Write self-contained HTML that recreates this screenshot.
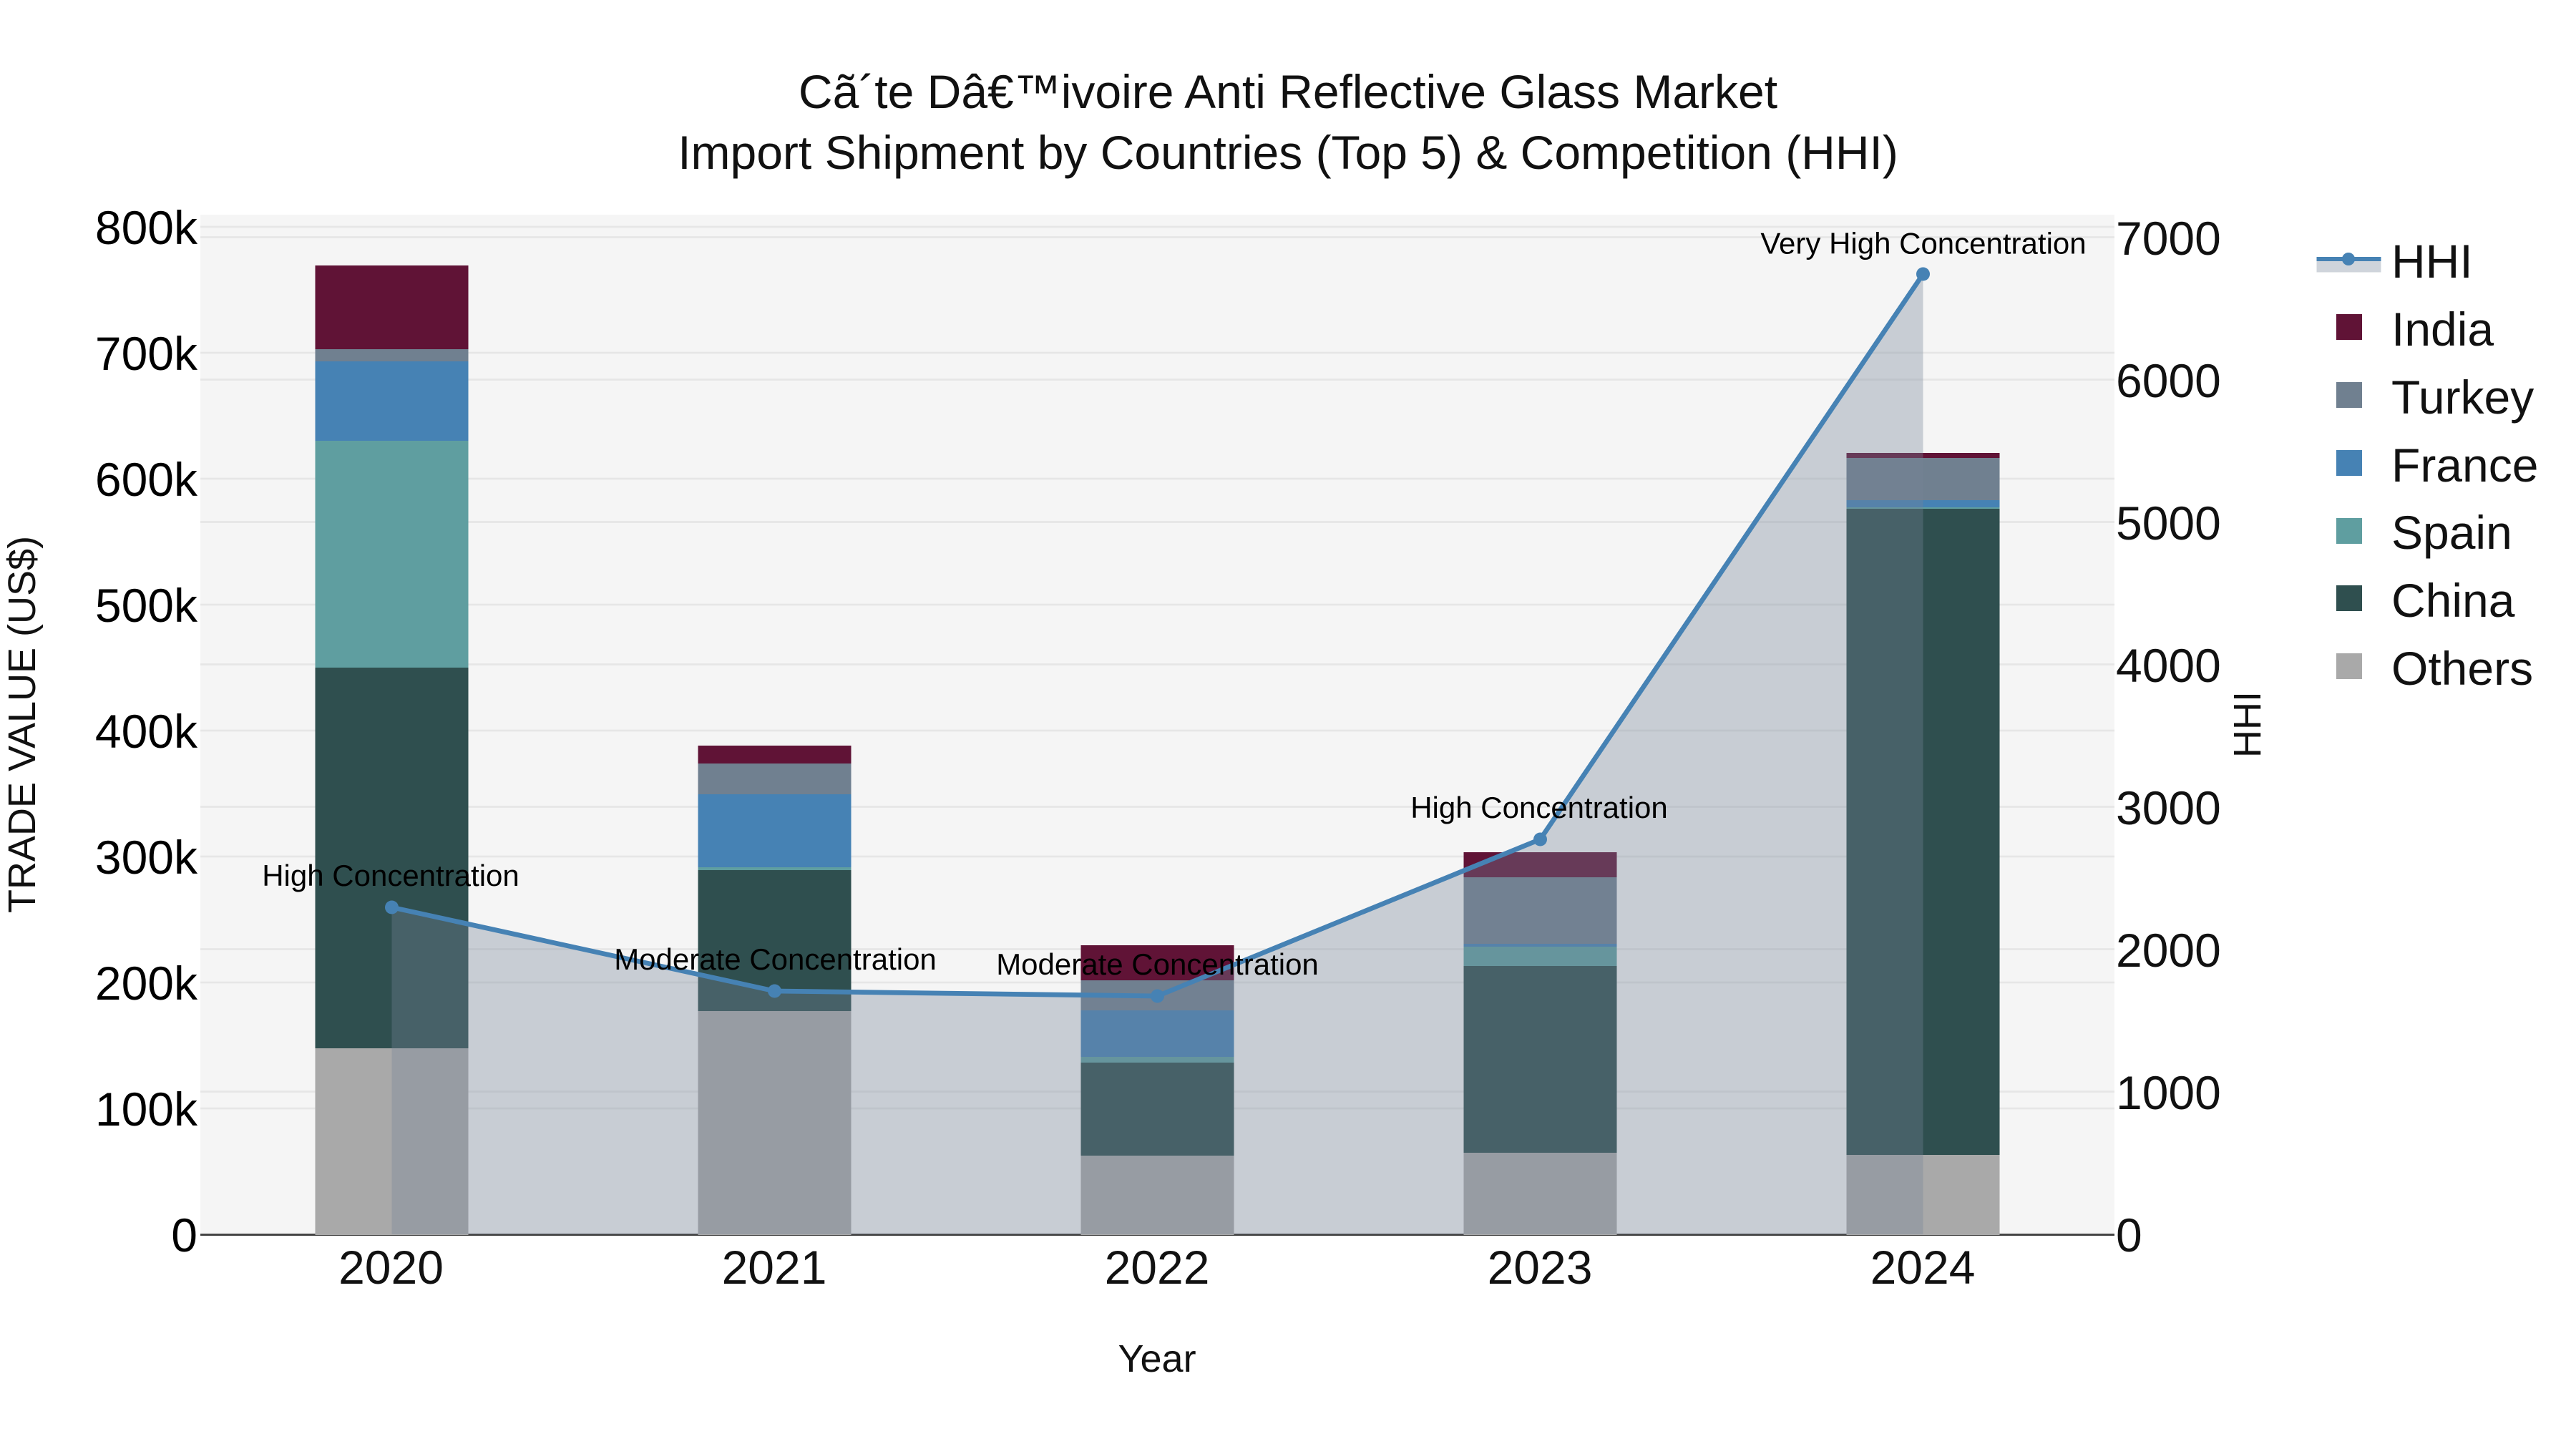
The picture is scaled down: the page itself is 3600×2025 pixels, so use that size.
<!DOCTYPE html>
<html>
<head>
<meta charset="utf-8">
<title>Import Shipment by Countries</title>
<style>
html,body{margin:0;padding:0;background:#fff;width:3600px;height:2025px;overflow:hidden}
svg{display:block}
text{font-family:"Liberation Sans",Arial,sans-serif}
</style>
</head>
<body>
<svg width="3600" height="2025" viewBox="0 0 3600 2025" xmlns="http://www.w3.org/2000/svg">
<rect width="3600" height="2025" fill="#fff"/>
<rect x="280" y="300" width="2675" height="1426" fill="#f5f5f5"/>
<g stroke="#e6e6e6" stroke-width="2.7">
<path d="M280 317H2955M280 493H2955M280 669H2955M280 845H2955M280 1021H2955M280 1197H2955M280 1373H2955M280 1549H2955"/>
<path d="M280 331.5H2955M280 530.5H2955M280 729.5H2955M280 928.5H2955M280 1127.5H2955M280 1326.5H2955M280 1525.5H2955"/>
</g>
<path d="M280 1725.5H2955" stroke="#444" stroke-width="3"/>
<g>
<rect x="440.5" y="371" width="214" height="117" fill="#601336"/>
<rect x="440.5" y="488" width="214" height="17" fill="#708090"/>
<rect x="440.5" y="505" width="214" height="111" fill="#4682b4"/>
<rect x="440.5" y="616" width="214" height="317" fill="#5f9ea0"/>
<rect x="440.5" y="933" width="214" height="532" fill="#2f4f4f"/>
<rect x="440.5" y="1465" width="214" height="261" fill="#a9a9a9"/>

<rect x="975.5" y="1042" width="214" height="25" fill="#601336"/>
<rect x="975.5" y="1067" width="214" height="43" fill="#708090"/>
<rect x="975.5" y="1110" width="214" height="102" fill="#4682b4"/>
<rect x="975.5" y="1212" width="214" height="4" fill="#5f9ea0"/>
<rect x="975.5" y="1216" width="214" height="197" fill="#2f4f4f"/>
<rect x="975.5" y="1413" width="214" height="313" fill="#a9a9a9"/>

<rect x="1510.5" y="1321" width="214" height="49" fill="#601336"/>
<rect x="1510.5" y="1370" width="214" height="42" fill="#708090"/>
<rect x="1510.5" y="1412" width="214" height="65" fill="#4682b4"/>
<rect x="1510.5" y="1477" width="214" height="8" fill="#5f9ea0"/>
<rect x="1510.5" y="1485" width="214" height="130" fill="#2f4f4f"/>
<rect x="1510.5" y="1615" width="214" height="111" fill="#a9a9a9"/>

<rect x="2045.5" y="1191" width="214" height="35" fill="#601336"/>
<rect x="2045.5" y="1226" width="214" height="93" fill="#708090"/>
<rect x="2045.5" y="1319" width="214" height="4" fill="#4682b4"/>
<rect x="2045.5" y="1323" width="214" height="27" fill="#5f9ea0"/>
<rect x="2045.5" y="1350" width="214" height="261" fill="#2f4f4f"/>
<rect x="2045.5" y="1611" width="214" height="115" fill="#a9a9a9"/>

<rect x="2580.5" y="633" width="214" height="7" fill="#601336"/>
<rect x="2580.5" y="640" width="214" height="59" fill="#708090"/>
<rect x="2580.5" y="699" width="214" height="10" fill="#4682b4"/>
<rect x="2580.5" y="709" width="214" height="2" fill="#5f9ea0"/>
<rect x="2580.5" y="711" width="214" height="903" fill="#2f4f4f"/>
<rect x="2580.5" y="1614" width="214" height="112" fill="#a9a9a9"/>
</g>
<path d="M547.5 1268L1082.5 1385L1617.5 1392L2152.5 1173L2687.5 383V1725H547.5Z" fill="rgb(118,132,152)" fill-opacity="0.35"/>
<path d="M547.5 1268L1082.5 1385L1617.5 1392L2152.5 1173L2687.5 383" fill="none" stroke="#4682b4" stroke-width="6.75" stroke-linejoin="round"/>
<g fill="#4682b4">
<circle cx="547.5" cy="1268" r="9.5"/>
<circle cx="1082.5" cy="1385" r="9.5"/>
<circle cx="1617.5" cy="1392" r="9.5"/>
<circle cx="2152.5" cy="1173" r="9.5"/>
<circle cx="2687.5" cy="383" r="9.5"/>
</g>
<g font-size="42" fill="#000" text-anchor="middle">
<text x="546" y="1238">High Concentration</text>
<text x="1083.5" y="1355">Moderate Concentration</text>
<text x="1617.5" y="1362">Moderate Concentration</text>
<text x="2151" y="1143">High Concentration</text>
<text x="2688" y="354.5">Very High Concentration</text>
</g>
<g font-size="66" fill="#111" text-anchor="middle">
<text x="1800" y="151">Cã´te Dâ€™ivoire Anti Reflective Glass Market</text>
<text x="1800" y="236">Import Shipment by Countries (Top 5) &amp; Competition (HHI)</text>
</g>
<g font-size="66" fill="#000" text-anchor="end">
<text x="276" y="341">800k</text>
<text x="276" y="517">700k</text>
<text x="276" y="693">600k</text>
<text x="276" y="869">500k</text>
<text x="276" y="1045">400k</text>
<text x="276" y="1221">300k</text>
<text x="276" y="1397">200k</text>
<text x="276" y="1573">100k</text>
<text x="276" y="1749">0</text>
</g>
<g font-size="66" fill="#111">
<text x="2957" y="356">7000</text>
<text x="2957" y="555">6000</text>
<text x="2957" y="754">5000</text>
<text x="2957" y="953">4000</text>
<text x="2957" y="1152">3000</text>
<text x="2957" y="1351">2000</text>
<text x="2957" y="1550">1000</text>
<text x="2957" y="1749">0</text>
</g>
<g font-size="66" fill="#111" text-anchor="middle">
<text x="546.5" y="1794">2020</text>
<text x="1082" y="1794">2021</text>
<text x="1617" y="1794">2022</text>
<text x="2152" y="1794">2023</text>
<text x="2687" y="1794">2024</text>
</g>
<text x="1617" y="1917" font-size="54" fill="#111" text-anchor="middle">Year</text>
<text transform="translate(49 1012.5) rotate(-90)" font-size="54" fill="#111" text-anchor="middle">TRADE VALUE (US$)</text>
<text transform="translate(3159 1012.5) rotate(-90)" font-size="54" fill="#111" text-anchor="middle">HHI</text>
<rect x="3237.5" y="362" width="90" height="18.5" fill="rgb(118,132,152)" fill-opacity="0.35"/>
<path d="M3237.5 362H3327.5" stroke="#4682b4" stroke-width="6"/>
<circle cx="3282" cy="362" r="9" fill="#4682b4"/>
<rect x="3265" y="439" width="36" height="36" fill="#601336"/>
<rect x="3265" y="534" width="36" height="36" fill="#708090"/>
<rect x="3265" y="629" width="36" height="36" fill="#4682b4"/>
<rect x="3265" y="724" width="36" height="36" fill="#5f9ea0"/>
<rect x="3265" y="818" width="36" height="36" fill="#2f4f4f"/>
<rect x="3265" y="913" width="36" height="36" fill="#a9a9a9"/>
<g font-size="66" fill="#111">
<text x="3342" y="388">HHI</text>
<text x="3342" y="483">India</text>
<text x="3342" y="578">Turkey</text>
<text x="3342" y="673">France</text>
<text x="3342" y="767">Spain</text>
<text x="3342" y="862">China</text>
<text x="3342" y="957">Others</text>
</g>
</svg>
</body>
</html>
